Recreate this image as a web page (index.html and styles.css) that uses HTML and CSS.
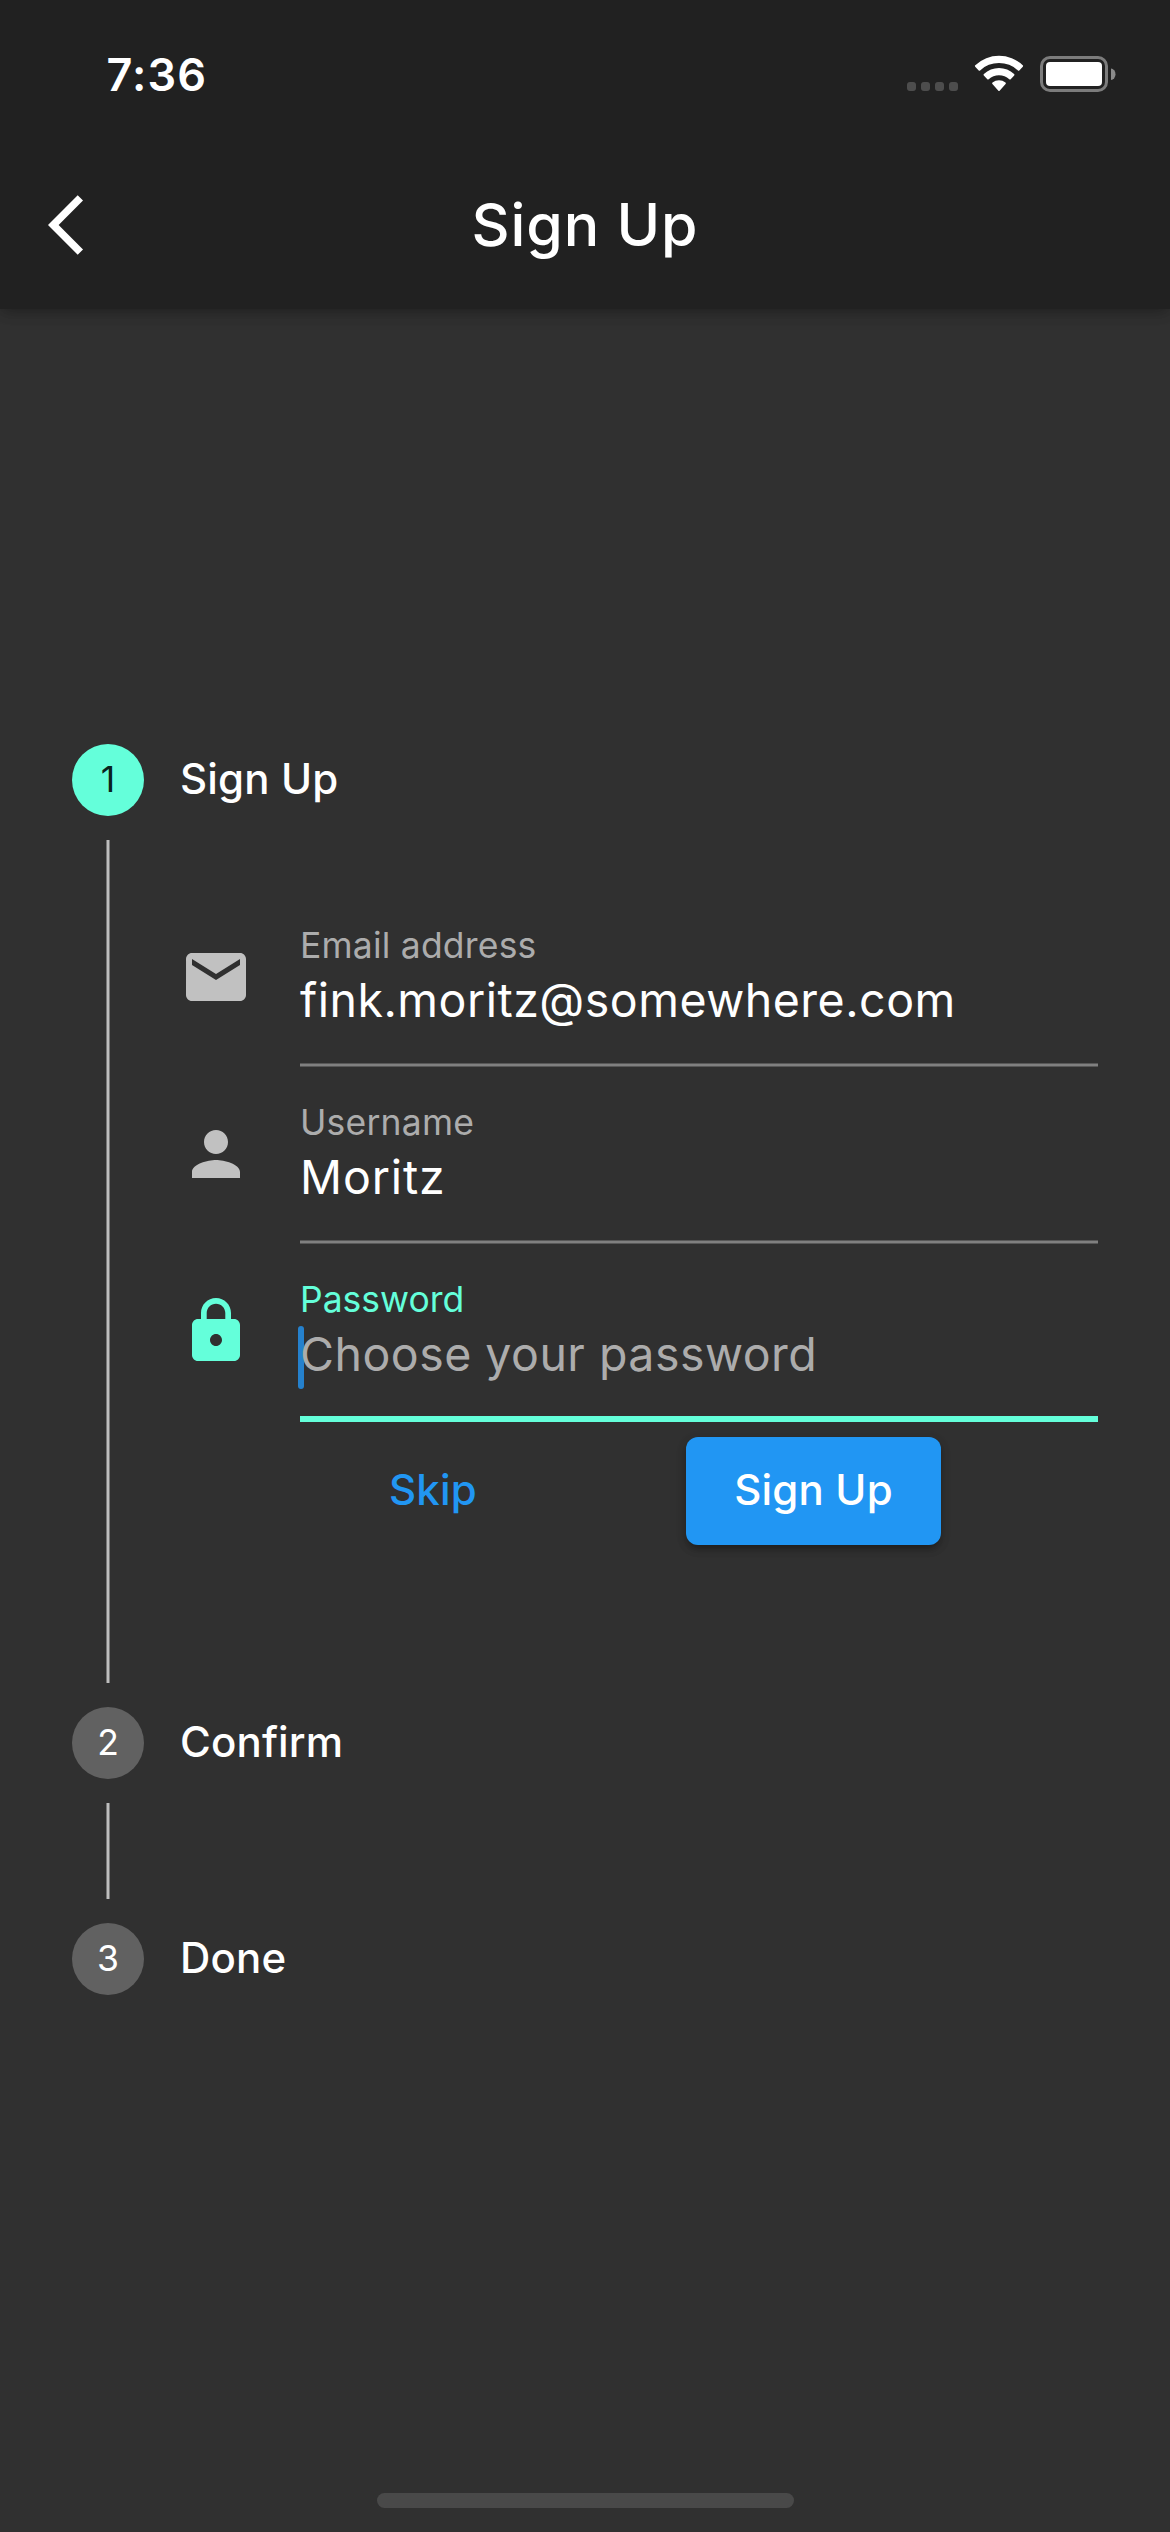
FILE: index.html
```html
<!DOCTYPE html>
<html lang="en">
<head>
<meta charset="utf-8">
<title>Sign Up</title>
<link rel="stylesheet" href="styles.css">
</head>
<body>
<div class="screen">
  <header class="app-bar">
    <div class="status-bar">
      <span class="clock">7:36</span>
      <div class="indicators">
        <div class="signal"><i></i><i></i><i></i><i></i></div>
        <svg class="wifi" viewBox="974 54 50 38" width="50" height="38" fill="#fff">
          <path d="M975.2 66.7 Q974.5 66 975.3 65.3 A34.5 34.5 0 0 1 1022.7 65.3 Q1023.5 66 1022.8 66.7 L1019.3 70.4 Q1018.6 71 1017.9 70.4 A27.5 27.5 0 0 0 980.1 70.4 Q979.4 71 978.7 70.4 Z"/>
          <path d="M983.8 75.4 Q983.1 74.7 983.9 74 A22 22 0 0 1 1014.1 74 Q1014.9 74.7 1014.2 75.4 L1010.7 79.2 Q1010 79.8 1009.3 79.2 A15.5 15.5 0 0 0 988.7 79.2 Q988 79.8 987.3 79.2 Z"/>
          <path d="M992.4 84 Q991.7 83.2 992.5 82.6 A10.5 10.5 0 0 1 1005.5 82.6 Q1006.3 83.2 1005.6 84 L999.6 90.8 Q999 91.4 998.4 90.8 Z"/>
        </svg>
        <svg class="battery" viewBox="0 0 76 36" width="76" height="36">
          <rect x="1.5" y="1.5" width="65" height="33" rx="8.5" fill="none" stroke="#7c7c7c" stroke-width="3"/>
          <rect x="6" y="6" width="56" height="24" rx="4" fill="#fff"/>
          <path d="M71 12.500 A4.500 5.750 0 0 1 71 24 Z" fill="#8a8a8a"/>
        </svg>
      </div>
    </div>
    <nav class="toolbar">
      <svg class="back" viewBox="0 0 24 24" width="72" height="72" fill="#fff"><path d="M11.67 3.87L9.9 2.1 0 12l9.9 9.9 1.77-1.77L3.54 12z"/></svg>
      <h1>Sign Up</h1>
    </nav>
  </header>

  <main class="stepper">
    <div class="step-head">
      <span class="badge badge-active">1</span>
      <span class="step-title">Sign Up</span>
    </div>
    <section class="step-body">
      <div class="connector"></div>
      <form class="form">
        <div class="field">
          <svg class="icon" viewBox="0 0 24 24"><path d="M20 4H4c-1.1 0-1.99.9-1.99 2L2 18c0 1.1.9 2 2 2h16c1.1 0 2-.9 2-2V6c0-1.1-.9-2-2-2zm0 4l-8 5-8-5V6l8 5 8-5v2z"/></svg>
          <div class="input">
            <span class="label">Email address</span>
            <span class="value email">fink.moritz@somewhere.com</span>
          </div>
        </div>
        <div class="field">
          <svg class="icon" viewBox="0 0 24 24"><path d="M12 12c2.21 0 4-1.79 4-4s-1.79-4-4-4-4 1.79-4 4 1.79 4 4 4zm0 2c-2.67 0-8 1.34-8 4v2h16v-2c0-2.66-5.33-4-8-4z"/></svg>
          <div class="input">
            <span class="label">Username</span>
            <span class="value name">Moritz</span>
          </div>
        </div>
        <div class="field focused">
          <svg class="icon" viewBox="0 0 24 24"><path d="M18 8h-1V6c0-2.76-2.24-5-5-5S7 3.24 7 6v2H6c-1.1 0-2 .9-2 2v10c0 1.1.9 2 2 2h12c1.1 0 2-.9 2-2V10c0-1.1-.9-2-2-2zm-6 9c-1.1 0-2-.9-2-2s.9-2 2-2 2 .9 2 2-.9 2-2 2zm3.100-9H8.900V6c0-1.710 1.390-3.100 3.100-3.100 1.710 0 3.100 1.390 3.100 3.100v2z"/></svg>
          <div class="input">
            <span class="label">Password</span>
            <span class="value hint">Choose your password</span>
            <span class="caret"></span>
          </div>
        </div>
        <div class="actions">
          <button type="button" class="btn btn-text">Skip</button>
          <button type="button" class="btn btn-filled">Sign Up</button>
        </div>
      </form>
    </section>

    <div class="step-head">
      <span class="badge">2</span>
      <span class="step-title">Confirm</span>
    </div>
    <div class="step-gap"><div class="connector"></div></div>
    <div class="step-head">
      <span class="badge">3</span>
      <span class="step-title">Done</span>
    </div>
  </main>

  <div class="home-indicator"></div>
</div>
</body>
</html>
```
FILE: styles.css
```css
* {
  box-sizing: border-box;
}

body {
  margin: 0;
  background: #303030;
  color: #fff;
  font-family: Inter, "Liberation Sans", sans-serif;
}

.screen {
  display: flex;
  flex-direction: column;
  width: 1170px;
  height: 2532px;
  overflow: hidden;
}

/* App bar */
.app-bar {
  height: 309px;
  background: #212121;
  box-shadow: 0 6px 12px -3px rgba(0, 0, 0, .2), 0 3px 14px rgba(0, 0, 0, .14);
}

.status-bar {
  display: flex;
  justify-content: space-between;
  height: 141px;
  padding: 0 54px 0 106.5px;
}

.clock {
  height: 150px;
  font-size: 45px;
  font-weight: 600;
  line-height: 149px;
  letter-spacing: 1.1px;
}

.indicators {
  display: flex;
  align-items: flex-start;
}

.signal {
  display: flex;
  gap: 5px;
  margin: 82px 16px 0 0;
}

.signal i {
  width: 9px;
  height: 9px;
  border-radius: 3px;
  background: #4d4d4d;
}

.wifi {
  margin: 54px 16px 0 0;
}

.battery {
  margin-top: 56px;
}

.toolbar {
  display: grid;
  grid-template-columns: 72px 1fr 72px;
  align-items: center;
  height: 168px;
  padding: 0 48px;
}

.toolbar h1 {
  margin: 0;
  text-align: center;
  font-size: 59px;
  font-weight: 500;
  line-height: 72px;
  letter-spacing: .85px;
}

/* Stepper */
.stepper {
  flex: 1;
  padding: 435px 72px 0;
}

.step-head {
  display: flex;
  align-items: center;
  gap: 36px;
  height: 72px;
}

.badge {
  width: 72px;
  height: 72px;
  border-radius: 50%;
  background: #616161;
  font-size: 35.5px;
  line-height: 71px;
  text-align: center;
}

.badge-active {
  background: #64ffda;
  color: #09231d;
}

.step-title {
  height: 72px;
  font-size: 42px;
  font-weight: 500;
  line-height: 70px;
  letter-spacing: .15px;
}

.connector {
  width: 4px;
  margin: 0 34px;
  border: solid #777;
  border-width: 0 1px;
  background: #bdbdbd;
}

.step-body {
  display: flex;
  gap: 36px;
  height: 891px;
  padding: 24px 0;
}

.step-gap {
  display: flex;
  height: 144px;
  padding: 24px 0;
}

/* Form */
.form {
  flex: 1;
  padding-top: 50px;
}

.field {
  display: flex;
  gap: 48px;
  height: 177px;
}

.icon {
  width: 72px;
  height: 72px;
  margin-top: 51px;
  fill: #c1c1c1;
}

.input {
  position: relative;
  display: flex;
  flex: 1;
  flex-direction: column;
  gap: 7px;
  padding-top: 37px;
  background: linear-gradient(#585858 25%, #808080 25% 75%, #585858 75%) bottom / 100% 4px no-repeat;
}

.label {
  color: #acacac;
  font-size: 35.5px;
  line-height: 38px;
  letter-spacing: .2px;
}

.value {
  font-size: 46.5px;
  line-height: 56px;
  letter-spacing: .48px;
}

.email {
  letter-spacing: .5px;
}

.name {
  letter-spacing: .9px;
}

.focused {
  height: 178px;
}

.focused .icon {
  fill: #64ffda;
}

.focused .input {
  border-bottom: 6px solid #64ffda;
  background: none;
}

.focused .label {
  color: #64ffda;
  letter-spacing: 0;
}

.hint {
  position: relative;
  z-index: 1;
  color: #acacac;
}

.caret {
  position: absolute;
  left: -2px;
  top: 82px;
  width: 6px;
  height: 63px;
  border-radius: 3px;
  background: #2581cd;
}

.actions {
  display: flex;
  justify-content: space-evenly;
  margin-top: 15px;
}

.btn {
  height: 108px;
  padding: 0 0 2px;
  border: 0;
  border-radius: 12px;
  font: 500 42px/106px Inter, "Liberation Sans", sans-serif;
  letter-spacing: .2px;
}

.btn-text {
  width: 192px;
  background: none;
  color: #2196f3;
}

.btn-filled {
  width: 255px;
  background: #2196f3;
  color: #fff;
  box-shadow: 0 6px 6px -4px rgba(0, 0, 0, .2), 0 4px 8px rgba(0, 0, 0, .18), 0 3px 12px rgba(0, 0, 0, .1);
}

.home-indicator {
  align-self: center;
  width: 417px;
  height: 15px;
  margin-bottom: 24px;
  border-radius: 8px;
  background: #494949;
}
```
